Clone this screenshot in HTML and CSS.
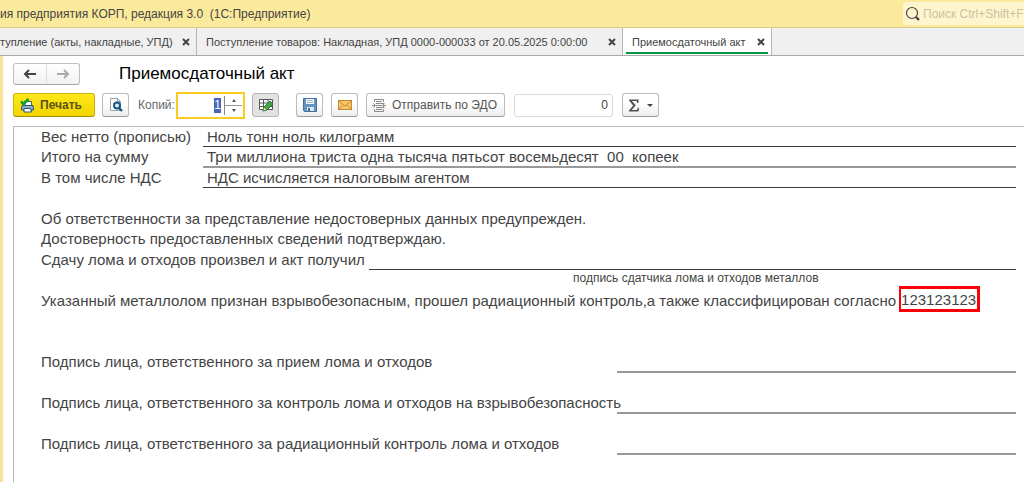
FILE: index.html
```html
<!DOCTYPE html>
<html lang="ru">
<head>
<meta charset="utf-8">
<meta name="viewport" content="width=device-width, initial-scale=1">
<title>Приемосдаточный акт</title>
<link rel="stylesheet" href="styles.css">
</head>
<body>
<header class="titlebar">
  <div class="app-title"><span>ия предприятия КОРП, редакция 3.0 &nbsp;(1С:Предприятие)</span></div>
  <label class="search">
    <svg width="16" height="16" viewBox="0 0 16 16" fill="none" stroke="#444"><circle cx="7" cy="7" r="5.500" stroke-width="1.200"/><path d="M11 11l3 3" stroke-width="2.400"/></svg>
    <input type="text" placeholder="Поиск Ctrl+Shift+F" aria-label="Поиск">
  </label>
</header>
<nav class="tabs">
  <div class="tab tab-first"><span class="tab-name">тупление (акты, накладные, УПД)</span><button class="close" aria-label="Закрыть"><svg width="8" height="8" viewBox="0 0 8 8"><path d="M1 1l6 6M7 1L1 7"/></svg></button></div>
  <div class="tab tab-second"><span class="tab-name">Поступление товаров: Накладная, УПД 0000-000033 от 20.05.2025 0:00:00</span><button class="close" aria-label="Закрыть"><svg width="8" height="8" viewBox="0 0 8 8"><path d="M1 1l6 6M7 1L1 7"/></svg></button></div>
  <div class="tab tab-active"><span class="tab-name">Приемосдаточный акт</span><button class="close" aria-label="Закрыть"><svg width="8" height="8" viewBox="0 0 8 8"><path d="M1 1l6 6M7 1L1 7"/></svg></button></div>
</nav>
<main class="form">
  <div class="heading">
    <div class="history">
      <button aria-label="Назад"><svg width="14" height="10" viewBox="0 0 14 10"><path d="M13 5H3M6 1L2 5l4 4" fill="none" stroke="#444" stroke-width="2"/></svg></button>
      <button aria-label="Вперед"><svg width="14" height="10" viewBox="0 0 14 10"><path d="M1 5h10M8 1l4 4-4 4" fill="none" stroke="#aaa" stroke-width="2"/></svg></button>
    </div>
    <h1>Приемосдаточный акт</h1>
  </div>
  <div class="toolbar">
    <button class="btn print">
      <svg width="14" height="15" viewBox="0 0 14 15"><path d="M5 3.500h6.500V8H5z" fill="#fff" stroke="#47637a"/><path d="M2 7.500h11l.5 4.500h-12z" fill="#8fb2cc" stroke="#2f5573"/><path d="M4 10.500h6.500l1 3.500H4z" fill="#fff" stroke="#2f5573"/><path d="M1 3.500L3.500 6 8.500 1" fill="none" stroke="#149b26" stroke-width="2.600"/></svg>
      <span>Печать</span>
    </button>
    <button class="btn preview" aria-label="Просмотр"><svg width="14" height="16" viewBox="0 0 14 16"><path d="M1.500 1.500h7l3 3v9h-10z" fill="#fff" stroke="#95a2ad"/><path d="M8.500 1.500v3h3" fill="none" stroke="#95a2ad"/><circle cx="8" cy="8.500" r="3" fill="#dcebf5" stroke="#175680" stroke-width="1.900"/><path d="M10 11l3 3" stroke="#175680" stroke-width="2.400"/></svg></button>
    <label class="copies-label" for="copies">Копий:</label>
    <div class="copies">
      <div class="copies-value"><input id="copies" type="text" value="1"></div>
      <div class="spin"><button aria-label="Больше"><svg width="4" height="3" viewBox="0 0 4 3"><path d="M0 3l2-3 2 3z" fill="#555"/></svg></button><button aria-label="Меньше"><svg width="4" height="3" viewBox="0 0 4 3"><path d="M0 0l2 3 2-3z" fill="#555"/></svg></button></div>
    </div>
    <button class="btn edit" aria-label="Редактирование"><svg width="16" height="14" viewBox="0 0 16 14"><path d="M1.500 1.500h13v10h-13zM1.500 5h13M1.500 8.500h13M5.500 1.500v10M10 1.500v10" fill="#fff" stroke="#555"/><path d="M5 13l1-4 6-6 3 3-6 6z" fill="#3fa646" stroke="#287b31"/><path d="M5 13l1-4 3 3z" fill="#f4cf9b" stroke="#287b31" stroke-width=".5"/></svg></button>
    <button class="btn save" aria-label="Сохранить"><svg width="14" height="14" viewBox="0 0 14 14"><path d="M.5.500h13v13h-12l-1-1z" fill="#6295c4" stroke="#426e99"/><path d="M3 1h8v5H3z" fill="#f5f9fc"/><path d="M4 2.500h6M4 4.500h6" stroke="#a4b5c3"/><path d="M4 9h7v4H4z" fill="#dce7f0"/><path d="M5 10h2v3H5z" fill="#426e99"/></svg></button>
    <button class="btn mail" aria-label="Отправить по почте"><svg width="14" height="10" viewBox="0 0 14 10"><rect x=".5" y=".5" width="13" height="9" fill="#f8c66a" stroke="#c7852d"/><path d="M1 1l6 5 6-5M1 9l4-4M13 9L9 5" fill="none" stroke="#c7852d"/></svg></button>
    <button class="btn edo"><svg width="14" height="13" viewBox="0 0 14 13" fill="none" stroke="#8c8c8c"><path d="M2.500 3V.500h9V3M2.500 10v2.500h9V10M4 2.500h6M4 4.500h8M4 6.500h6M4 8.500h8M4 10.500h6M0 6.500h3M11 6.500h3"/><path d="M1.500 4.500l2 2-2 2M12.500 4.500l-2 2 2 2"/></svg><span>Отправить по ЭДО</span></button>
    <input class="sum" type="text" value="0" aria-label="Сумма">
    <button class="btn sigma" aria-label="Сумма выделенных ячеек"><svg width="12" height="13" viewBox="0 0 12 13"><path d="M1 .500h9.500V4H9.300L8.600 2H4l3.700 4.200L3.700 11H9l.8-2.200H11l-.5 3.700H1v-1l4.200-5L1 1.600z" fill="#505050"/></svg><svg width="6" height="3" viewBox="0 0 6 3"><path d="M0 0h6L3 3z" fill="#444"/></svg></button>
  </div>
  <section class="document">
    <dl class="totals">
      <div class="line"><dt>Вес нетто (прописью)</dt><dd>Ноль тонн ноль килограмм</dd></div>
      <div class="line tall soft"><dt>Итого на сумму</dt><dd>Три миллиона триста одна тысяча пятьсот восемьдесят &nbsp;00 &nbsp;копеек</dd></div>
      <div class="line"><dt>В том числе НДС</dt><dd>НДС исчисляется налоговым агентом</dd></div>
    </dl>
    <div class="statement">
      <p class="line">Об ответственности за представление недостоверных данных предупрежден.</p>
      <p class="line tall">Достоверность предоставленных сведений подтверждаю.</p>
      <div class="line received"><span>Сдачу лома и отходов произвел и акт получил</span><i class="rule"></i></div>
      <p class="caption">подпись сдатчика лома и отходов металлов</p>
      <p class="line result"><span>Указанный металлолом признан взрывобезопасным, прошел радиационный контроль,а также классифицирован согласно</span><mark>123123123</mark></p>
    </div>
    <div class="signatures">
      <div class="line tall signature"><span>Подпись лица, ответственного за прием лома и отходов</span><i class="rule"></i></div>
      <div class="line tall signature"><span>Подпись лица, ответственного за контроль лома и отходов на взрывобезопасность</span><i class="rule"></i></div>
      <div class="line tall signature"><span>Подпись лица, ответственного за радиационный контроль лома и отходов</span><i class="rule"></i></div>
    </div>
  </section>
</main>
</body>
</html>
```
FILE: styles.css
```css
* { box-sizing: border-box; }
html { height: 100%; }
body {
  margin: 0;
  min-height: 100%;
  display: flex;
  flex-direction: column;
  overflow: hidden;
  background: #fff;
  color: #444;
  font: 12px/16px "Liberation Sans", Arial, sans-serif;
}
button, input { font: inherit; color: inherit; margin: 0; padding: 0; }
button { border: 0; background: none; }
input { min-width: 0; outline: 0; }
svg { display: block; flex: none; }
h1, p, dl, dd { margin: 0; }

.titlebar {
  display: flex;
  align-items: center;
  justify-content: space-between;
  height: 28px;
  background: #fcea9c;
  border-bottom: 1px solid #d9ca8c;
}
.app-title { white-space: pre; }
.search {
  display: flex;
  align-items: center;
  gap: 2px;
  width: 121px;
  height: 23px;
  padding-left: 2px;
  border-radius: 3px 0 0 3px;
  background: #fef5cd;
}
.search input { flex: 1; border: 0; background: none; }
.search input::placeholder { color: #c8c2a6; opacity: 1; }

.tabs {
  display: flex;
  height: 28px;
  background: #f0f0f0;
  border-bottom: 1px solid #a9a9a9;
  font-size: 11px;
}
.tab {
  display: flex;
  align-items: center;
  justify-content: space-between;
  padding: 0 5px 0 9px;
  border-right: 1px solid #b5b5b5;
  white-space: nowrap;
}
.tab-first { width: 197px; padding-left: 0; }
.tab-second { width: 426px; }
.tab-active {
  width: 149px;
  background: linear-gradient(#009646, #009646) center bottom 1px / calc(100% - 6px) 2px no-repeat #fff;
}
.close { padding: 1px; }
.close path { stroke: #444; stroke-width: 2; fill: none; }

.form {
  flex: 1;
  display: flex;
  flex-direction: column;
  padding: 7px 0 0 10px;
  border-left: 3px solid #f8e492;
}
.heading { display: flex; align-items: center; gap: 39px; height: 22px; }
.history {
  display: flex;
  width: 67px;
  height: 22px;
  border: 1px solid #c0c0c0;
  border-bottom-color: #a5a5a5;
  border-radius: 3px;
  background: linear-gradient(#fff, #f1f1f1);
}
.history button { flex: 1; display: grid; place-items: center; }
.history button + button { border-left: 1px solid #ddd; }
h1 { color: #000; font-size: 17px; line-height: 22px; font-weight: 400; }

.toolbar { display: flex; align-items: center; height: 26px; margin: 7px 0 8px; }
.btn {
  display: flex;
  align-items: center;
  justify-content: center;
  flex: none;
  width: 27px;
  height: 24px;
  border: 1px solid #bcbcbc;
  border-bottom-color: #999;
  border-radius: 3px;
  background: linear-gradient(#fff 40%, #ededed);
  white-space: nowrap;
}
.print {
  width: 82px;
  justify-content: flex-start;
  gap: 6px;
  padding-left: 6px;
  border-color: #cdb20d;
  border-bottom-color: #a28d0c;
  background: linear-gradient(#ffe71a, #f2d500);
  color: #5c5314;
  font-weight: 700;
}
.preview { margin-left: 7px; }
.copies-label { width: 38px; margin-left: 9px; color: #666; }
.copies {
  display: flex;
  width: 69px;
  height: 27px;
  padding: 2px 1px;
  border: 2px solid #fbcb24;
  background: #fff;
}
.copies-value { flex: 1; display: flex; justify-content: flex-end; align-items: center; padding-right: 3px; }
.copies-value input { width: 7px; height: 15px; border: 0; background: #4a63bd; color: #fff; text-align: center; }
.spin { width: 18px; display: flex; flex-direction: column; border-left: 1px solid #888; }
.spin button { flex: 1; display: grid; place-items: center; }
.spin button + button { border-top: 1px solid #999; }
.edit { margin-left: 7px; background: #e2e2e2; border-color: #b5b5b5; }
.save { margin-left: 17px; }
.mail { margin-left: 8px; }
.edo { width: 139px; justify-content: flex-start; gap: 6px; padding-left: 5px; margin-left: 8px; color: #555; }
.sum {
  width: 99px;
  height: 23px;
  margin-left: 9px;
  padding: 0 4px;
  border: 1px solid #d9d9d9;
  border-radius: 3px;
  text-align: right;
}
.sigma { width: 37px; gap: 7px; margin-left: 9px; }

.document {
  flex: 1;
  padding: 0 8px 27px 27px;
  border: solid #b8b8b8;
  border-width: 1px 0 0 1px;
  font-size: 15px;
  white-space: nowrap;
}
.line { display: flex; height: 20px; line-height: 20px; }
.tall { height: 21px; }
.totals dt { width: 162px; }
.totals dd { flex: 1; padding-left: 4px; border-bottom: 1px solid #3c3c3c; }
.totals .soft dd { border-bottom: 2px solid #999; }
.statement { padding-top: 21px; }
.received { gap: 4px; }
.rule { flex: 1; border-bottom: 1px solid #3c3c3c; }
.caption { height: 21px; padding-left: 532px; font-size: 12px; line-height: 16px; }
.result { gap: 6px; align-items: center; }
mark {
  height: 26px;
  margin: -5px 0 0 -3px;
  padding-right: 1px;
  border: 3px solid #fb0007;
  border-left-width: 2px;
  background: none;
  color: inherit;
  line-height: 22px;
}
.signatures { display: grid; gap: 20px; padding-top: 41px; }
.signature span { width: 576px; }
.signature .rule { border-bottom: 2px solid #999; }
```
